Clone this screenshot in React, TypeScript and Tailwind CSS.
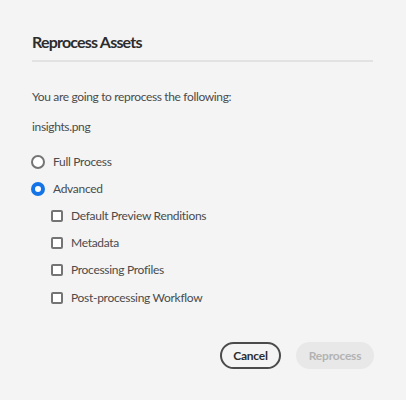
import React from "react";

const font = { fontFamily: '"Lato", "Open Sans", sans-serif' };

function Radio({ checked, label }: { checked?: boolean; label: string }) {
  return (
    <div className="flex items-center h-[27px]">
      <span
        className={
          checked
            ? "w-[14px] h-[14px] rounded-full border-[4px] border-[#1473e6] bg-white box-border"
            : "w-[14px] h-[14px] rounded-full border-2 border-[#747474] bg-white box-border"
        }
      />
      <span className="ml-[8px] text-[12px] tracking-[-0.3px] text-[#4b4b4b]">{label}</span>
    </div>
  );
}

function Check({ label }: { label: string }) {
  return (
    <div className="flex items-center h-[27.3px]">
      <span className="w-[12px] h-[12px] rounded-[2px] border-2 border-[#747474] bg-white box-border" />
      <span className="ml-[8px] text-[12px] tracking-[-0.3px] text-[#4b4b4b]">{label}</span>
    </div>
  );
}

export default function App() {
  return (
    <div className="w-[406px] h-[400px] bg-[#f4f4f4] px-8 pt-[30px] flex flex-col" style={font}>
      <div className="text-[16px] font-bold leading-[24px] tracking-[-0.8px] text-[#2c2c2c]">Reprocess Assets</div>
      <div className="mt-[6px] h-[2px] bg-[#e2e2e2] w-[341px]" />
      <div className="mt-[26px] text-[12px] leading-[18px] tracking-[-0.35px] text-[#4b4b4b]">You are going to reprocess the following:</div>
      <div className="mt-[12px] text-[12px] leading-[18px] tracking-[-0.35px] text-[#4b4b4b]">insights.png</div>
      <div className="mt-[12px] ml-[-1px] flex flex-col">
        <Radio label="Full Process" />
        <Radio checked label="Advanced" />
        <div className="ml-[20px] flex flex-col">
          <Check label="Default Preview Renditions" />
          <Check label="Metadata" />
          <Check label="Processing Profiles" />
          <Check label="Post-processing Workflow" />
        </div>
      </div>
      <div className="mt-auto mb-[31px] flex justify-end gap-[15px]">
        <button className="h-[27px] w-[61px] rounded-full border-2 border-[#4b4b4b] text-[12px] font-bold tracking-[-0.2px] text-[#2c2c2c]">
          Cancel
        </button>
        <button className="h-[27px] w-[78px] rounded-full bg-[#e8e8e8] text-[12px] font-bold tracking-[-0.2px] text-[#b3b3b3]">
          Reprocess
        </button>
      </div>
    </div>
  );
}
